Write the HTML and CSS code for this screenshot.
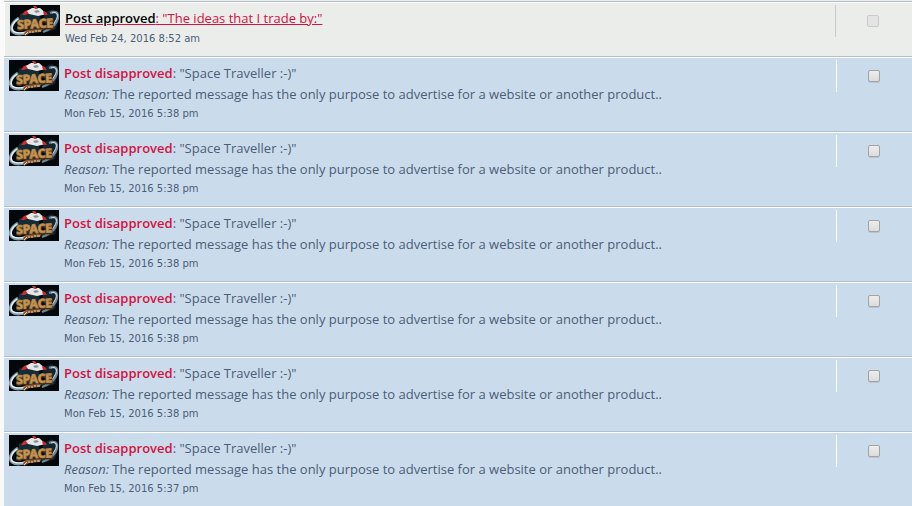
FILE: index.html
```html
<!DOCTYPE html>
<html lang="en">
<head>
    <meta charset="UTF-8">
    <meta name="viewport" content="width=device-width, initial-scale=1.0">
    <title>Notifications</title>
    <link rel="stylesheet" href="styles.css">
</head>
<body>
    <svg class="sprite" aria-hidden="true">
        <symbol id="avatar" viewBox="0 0 50 31">
            <rect width="50" height="31" fill="#04080b"/>
            <path d="M10 9 L17 5 L29 9 L34 25 L22 28 L8 22 Z" fill="#152b35"/>
            <path d="M33 8 L43 4 L49 13 L46 24 L37 27 Z" fill="#12242d"/>
            <path d="M9 13 C1 18 0 24 3 27 C7 30 14 29 18 27" fill="none" stroke="#7f9aa7" stroke-width="3"/>
            <path d="M8 14 C2 18 1 23 3 26 C6 29 12 28 17 27" fill="none" stroke="#e3edf1" stroke-width="1.5"/>
            <path d="M40 8 C45 6 48 7 48 11 C48 17 43 23 33 27" fill="none" stroke="#6d8997" stroke-width="2.4"/>
            <path d="M42 8 C47 6 49 10 46 15 C44 19 41 22 38 24" fill="none" stroke="#d0dfe5" stroke-width="1"/>
            <path d="M12 10 L15 6 L21 4 L20 8 L15 10 Z" fill="#d02c2c"/>
            <path d="M17 6 L22 3 L30 3 L37 9 L28 11 L19 9 Z" fill="#e5e7e8"/>
            <path d="M23 1 L26 1 L28 4 L25 4 Z" fill="#c23b38"/>
            <path d="M33 6 L36 7 L38 10 L34 10 Z" fill="#c6272a"/>
            <path d="M24 6 L28 5 L30 7 L26 8 Z" fill="#87949c"/>
            <g transform="rotate(-3 25 16)">
                <text class="logo-text" x="7" y="24" fill="#4a2b14" stroke="#4a2b14" stroke-width="2">SPACE</text>
                <text class="logo-text" x="7" y="23" fill="#d0a260" stroke="#b5884b" stroke-width="1">SPACE</text>
            </g>
            <path d="M14 28 L17 25 L32 24 L31 27 L20 28 L15 31 Z" fill="#8b5a35"/>
            <path d="M15 30 L18 27 M20 28 V26 M22 27 H24 M26 27 V25 M28 26 H31" fill="none" stroke="#e3cda7" stroke-width="1"/>
        </symbol>
    </svg>

    <form action="notifications.php" method="post">
        <ul class="notification-list">
            <li class="row read">
                <svg class="avatar" role="img" aria-label="Space avatar"><use href="#avatar"/></svg>
                <div class="notification">
                    <p class="title"><a href="#"><strong>Post approved</strong>: "The ideas that I trade by:"</a></p>
                    <p class="time">Wed Feb 24, 2016 8:52 am</p>
                </div>
                <div class="mark"><input type="checkbox" name="mark[]" aria-label="Mark read" disabled></div>
            </li>
            <li class="row unread">
                <svg class="avatar" role="img" aria-label="Space avatar"><use href="#avatar"/></svg>
                <div class="notification">
                    <p class="title"><strong>Post disapproved</strong>: "Space Traveller :-)"</p>
                    <p class="reason"><em>Reason:</em> The reported message has the only purpose to advertise for a website or another product..</p>
                    <p class="time">Mon Feb 15, 2016 5:38 pm</p>
                </div>
                <div class="mark"><input type="checkbox" name="mark[]" aria-label="Mark read"></div>
            </li>
            <li class="row unread">
                <svg class="avatar" role="img" aria-label="Space avatar"><use href="#avatar"/></svg>
                <div class="notification">
                    <p class="title"><strong>Post disapproved</strong>: "Space Traveller :-)"</p>
                    <p class="reason"><em>Reason:</em> The reported message has the only purpose to advertise for a website or another product..</p>
                    <p class="time">Mon Feb 15, 2016 5:38 pm</p>
                </div>
                <div class="mark"><input type="checkbox" name="mark[]" aria-label="Mark read"></div>
            </li>
            <li class="row unread">
                <svg class="avatar" role="img" aria-label="Space avatar"><use href="#avatar"/></svg>
                <div class="notification">
                    <p class="title"><strong>Post disapproved</strong>: "Space Traveller :-)"</p>
                    <p class="reason"><em>Reason:</em> The reported message has the only purpose to advertise for a website or another product..</p>
                    <p class="time">Mon Feb 15, 2016 5:38 pm</p>
                </div>
                <div class="mark"><input type="checkbox" name="mark[]" aria-label="Mark read"></div>
            </li>
            <li class="row unread">
                <svg class="avatar" role="img" aria-label="Space avatar"><use href="#avatar"/></svg>
                <div class="notification">
                    <p class="title"><strong>Post disapproved</strong>: "Space Traveller :-)"</p>
                    <p class="reason"><em>Reason:</em> The reported message has the only purpose to advertise for a website or another product..</p>
                    <p class="time">Mon Feb 15, 2016 5:38 pm</p>
                </div>
                <div class="mark"><input type="checkbox" name="mark[]" aria-label="Mark read"></div>
            </li>
            <li class="row unread">
                <svg class="avatar" role="img" aria-label="Space avatar"><use href="#avatar"/></svg>
                <div class="notification">
                    <p class="title"><strong>Post disapproved</strong>: "Space Traveller :-)"</p>
                    <p class="reason"><em>Reason:</em> The reported message has the only purpose to advertise for a website or another product..</p>
                    <p class="time">Mon Feb 15, 2016 5:38 pm</p>
                </div>
                <div class="mark"><input type="checkbox" name="mark[]" aria-label="Mark read"></div>
            </li>
            <li class="row unread">
                <svg class="avatar" role="img" aria-label="Space avatar"><use href="#avatar"/></svg>
                <div class="notification">
                    <p class="title"><strong>Post disapproved</strong>: "Space Traveller :-)"</p>
                    <p class="reason"><em>Reason:</em> The reported message has the only purpose to advertise for a website or another product..</p>
                    <p class="time">Mon Feb 15, 2016 5:37 pm</p>
                </div>
                <div class="mark"><input type="checkbox" name="mark[]" aria-label="Mark read"></div>
            </li>
        </ul>
    </form>
</body>
</html>
```
FILE: styles.css
```css
body {
    margin: 0;
    background-color: #fafafa;
    color: #4c5d77;
    font-family: "Open Sans", sans-serif;
    font-size: 13px;
}
.sprite {
    display: none;
}
.notification-list {
    list-style: none;
    margin: 0 0 0 4px;
    padding: 1px 0 0;
    background-color: #ebedeb;
}
.row {
    display: flex;
    align-items: flex-start;
    box-sizing: border-box;
    min-height: 75px;
    padding: 2px 0 0 5px;
    border-top: 1px solid #fff;
    border-bottom: 1px solid #b3bfcb;
}
.row:last-child {
    border-bottom: none;
    min-height: 74px;
}
.read {
    min-height: 56px;
    padding: 3px 1px 0 6px;
    border-top: 1px solid #b3bfcb;
    box-shadow: inset 1px 1px #fff;
    background-color: #ebedeb;
}
.unread {
    background-color: #cadceb;
}
.avatar {
    flex: none;
    width: 50px;
    height: 31px;
}
.logo-text {
    font-family: "Noto Sans", sans-serif;
    font-size: 12px;
    font-weight: bold;
}
.notification {
    flex: 1;
    padding: 3px 0 0 5px;
}
.notification p {
    margin: 0;
}
.title {
    line-height: 20px;
}
.title strong {
    color: #d31141;
    font-weight: 600;
}
.title a {
    color: #d31141;
}
.title a strong {
    color: #000;
}
.reason {
    line-height: 22px;
}
.time {
    font-family: "DejaVu Sans", sans-serif;
    font-size: 10px;
    line-height: 18px;
}
.read .time {
    line-height: 22px;
}
.mark {
    flex: none;
    box-sizing: border-box;
    width: 76px;
    height: 32px;
    padding: 10px 2px 0 0;
    border-left: 1px solid #fff;
    text-align: center;
    line-height: 12px;
}
.read .mark {
    border-color: #c8cbcb;
}
.mark input {
    appearance: none;
    box-sizing: border-box;
    width: 12px;
    height: 12px;
    margin: 0;
    border: 1px solid #a3a3a3;
    border-radius: 2px;
    background: linear-gradient(#ededed, #dcdcdc);
    box-shadow: 0 1px rgba(0, 0, 0, 0.1);
}
.mark input:disabled {
    border-color: #cacaca;
    background: #e4e4e4;
    box-shadow: none;
}
```
